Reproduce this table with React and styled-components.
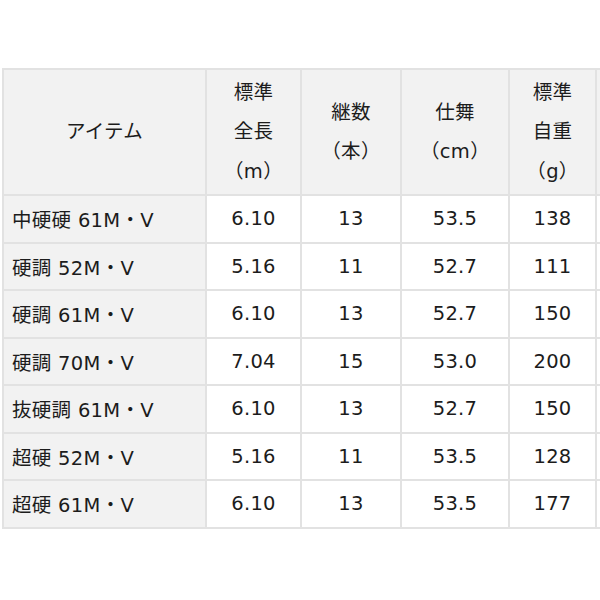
import React from "react";
import styled, { createGlobalStyle } from "styled-components";

const Global = createGlobalStyle`
  html, body { margin: 0; padding: 0; background: #fff; overflow: hidden; }
  body { font-family: "DejaVu Sans", "Noto Sans CJK JP", sans-serif; color: #1c1c1c; }
`;

const Page = styled.div`
  padding: 68px 0 0 2px;
  width: 700px;
`;

const Table = styled.table`
  border-collapse: collapse;
  table-layout: fixed;
  width: 690px;
  font-size: 19.5px;
  letter-spacing: 0.3px;
`;

const HeadCell = styled.th`
  background: #f2f2f2;
  border: 2px solid #e2e2e2;
  font-weight: normal;
  height: 124px;
  line-height: 39.5px;
  text-align: center;
  vertical-align: middle;
  padding: 0;
`;

const NameCell = styled.td`
  background: #f2f2f2;
  border: 2px solid #e2e2e2;
  height: 45.5px;
  padding: 0 0 0 8px;
  text-align: left;
  white-space: nowrap;
`;

const ValueCell = styled.td`
  background: #fff;
  border: 2px solid #e2e2e2;
  height: 45.5px;
  padding: 0;
  text-align: center;
`;

const cols = [203, 95, 100, 108, 87, 97];

const headers = [
  ["アイテム"],
  ["標準", "全長", "（m）"],
  ["継数", "（本）"],
  ["仕舞", "（cm）"],
  ["標準", "自重", "（g）"],
  [""],
];

const rows = [
  ["中硬硬 61M・V", "6.10", "13", "53.5", "138", ""],
  ["硬調 52M・V", "5.16", "11", "52.7", "111", ""],
  ["硬調 61M・V", "6.10", "13", "52.7", "150", ""],
  ["硬調 70M・V", "7.04", "15", "53.0", "200", ""],
  ["抜硬調 61M・V", "6.10", "13", "52.7", "150", ""],
  ["超硬 52M・V", "5.16", "11", "53.5", "128", ""],
  ["超硬 61M・V", "6.10", "13", "53.5", "177", ""],
];

export default function App() {
  return (
    <Page>
      <Global />
      <Table>
        <colgroup>
          {cols.map((w, i) => (
            <col key={i} style={{ width: w }} />
          ))}
        </colgroup>
        <thead>
          <tr>
            {headers.map((lines, i) => (
              <HeadCell key={i}>
                {lines.map((l, j) => (
                  <React.Fragment key={j}>
                    {j > 0 && <br />}
                    {l}
                  </React.Fragment>
                ))}
              </HeadCell>
            ))}
          </tr>
        </thead>
        <tbody>
          {rows.map((r, i) => (
            <tr key={i}>
              <NameCell>{r[0]}</NameCell>
              {r.slice(1).map((v, j) => (
                <ValueCell key={j}>{v}</ValueCell>
              ))}
            </tr>
          ))}
        </tbody>
      </Table>
    </Page>
  );
}
